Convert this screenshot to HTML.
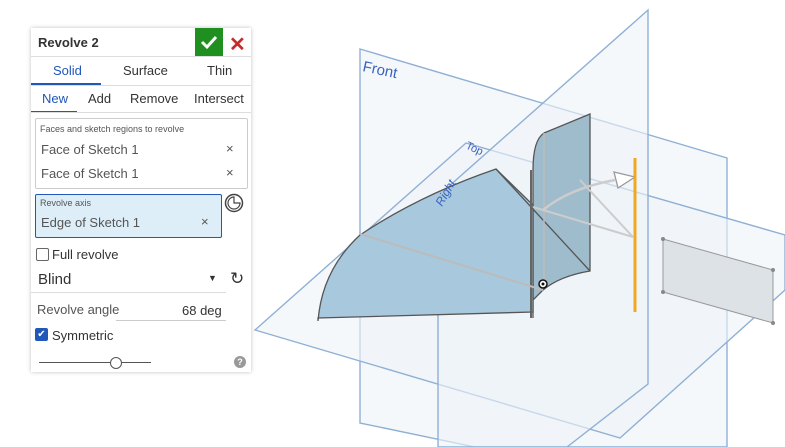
<!DOCTYPE html>
<html><head><style>
body{margin:0;width:785px;height:447px;background:#fff;overflow:hidden;position:relative;font-family:"Liberation Sans",sans-serif;}
svg{position:absolute;left:0;top:0}
.p{position:absolute;left:31px;top:28px;width:220px;height:344px;background:#fff;box-shadow:0 0 4px rgba(0,0,0,.25);font-size:13px;color:#333}
.a{position:absolute}
.hr{position:absolute;left:0;width:220px;height:1px;background:#ddd}
</style></head><body>
<svg width="785" height="447">
<g stroke="#8fb0d4" stroke-width="1.4" fill="#eef3f9" fill-opacity="0.6">
<polygon points="360,49 727,158 727,447 475,447 360,423"/>
<polygon points="255,330 466,143 785,235 785,290 620,438"/>
<polygon points="648,10 648,384 567,447 438,447 438,196"/>
</g>
<path d="M533,318 L533,170 Q533,140 544,133 L590,114 L590,271 Q560,276 543,290 L533,300 Z" fill="#9fbccd" stroke="#555" stroke-width="1.3"/>
<path d="M318,321 Q322,270 360,235 Q420,195 496,169 L533,205 L533,312 L318,318 Z" fill="#a8c9dd" stroke="#555" stroke-width="1.3"/>
<line x1="496" y1="169" x2="590" y2="271" stroke="#555" stroke-width="1.3"/>
<line x1="531" y1="170" x2="531" y2="318" stroke="#666" stroke-width="2"/>
<line x1="360" y1="234" x2="543" y2="290" stroke="#bbb" stroke-width="2"/>
<line x1="544" y1="133" x2="544" y2="285" stroke="#bbb" stroke-width="1.5"/>
<line x1="533" y1="207" x2="633" y2="237" stroke="#ccc" stroke-width="2"/>
<line x1="580" y1="180" x2="633" y2="237" stroke="#ccc" stroke-width="2"/>
<path d="M543,210 Q570,188 615,180" stroke="#ccc" stroke-width="2.5" fill="none"/>
<polygon points="614,172 635,177 618,188" fill="#fff" stroke="#999" stroke-width="1.3"/>
<circle cx="543" cy="284" r="4" fill="#fff" stroke="#111" stroke-width="1.5"/><circle cx="543" cy="284" r="1.5" fill="#111"/>
<line x1="635" y1="158" x2="635" y2="312" stroke="#f0a820" stroke-width="3"/>
<polygon points="663,239 773,270 773,323 663,292" fill="#dde2e6" stroke="#999" stroke-width="1"/>
<g fill="#888"><circle cx="663" cy="239" r="2"/><circle cx="773" cy="270" r="2"/><circle cx="773" cy="323" r="2"/><circle cx="663" cy="292" r="2"/></g>
<text x="362" y="71" fill="#3a63c0" font-size="15" font-family="Liberation Sans" transform="rotate(12 362 71)">Front</text>
<text x="465" y="148" fill="#3a63c0" font-size="11" font-family="Liberation Sans" transform="rotate(25 465 148)">Top</text>
<text x="442" y="207" fill="#3a63c0" font-size="12" font-style="italic" font-family="Liberation Sans" transform="rotate(-60 442 207)">Right</text>
</svg>
<div class="p">
<div class="a" style="left:7px;top:7px;font-weight:bold;font-size:13px">Revolve 2</div>
<div class="a" style="left:164px;top:0;width:28px;height:28px;background:#1f8f1f"><svg width="28" height="28"><path d="M7,14 L12,19 L21,9" stroke="#fff" stroke-width="3" fill="none"/></svg></div>
<div class="a" style="left:198px;top:4px;color:#c62b2b;font-size:20px;font-weight:bold">✕</div>
<div class="hr" style="top:28px"></div>
<div class="a" style="left:22px;top:35px;color:#2057b8">Solid</div>
<div class="a" style="left:92px;top:35px">Surface</div>
<div class="a" style="left:176px;top:35px">Thin</div>
<div class="a" style="left:0;top:55px;width:70px;height:2px;background:#2057b8"></div>
<div class="hr" style="top:57px"></div>
<div class="a" style="left:11px;top:63px;color:#2057b8">New</div>
<div class="a" style="left:57px;top:63px">Add</div>
<div class="a" style="left:99px;top:63px">Remove</div>
<div class="a" style="left:163px;top:63px">Intersect</div>
<div class="a" style="left:0;top:83px;width:46px;height:2px;background:#2057b8"></div>
<div class="hr" style="top:84px"></div>
<div class="a" style="left:4px;top:90px;width:211px;height:69px;border:1px solid #ccc;border-radius:2px"></div>
<div class="a" style="left:9px;top:96px;font-size:9px;color:#555">Faces and sketch regions to revolve</div>
<div class="a" style="left:10px;top:114px;color:#555">Face of Sketch 1</div><div class="a" style="left:195px;top:113px;color:#555">×</div>
<div class="a" style="left:10px;top:138px;color:#555">Face of Sketch 1</div><div class="a" style="left:195px;top:137px;color:#555">×</div>
<div class="a" style="left:4px;top:166px;width:185px;height:42px;border:1px solid #2057b8;border-radius:2px;background:#ddeef8"></div>
<div class="a" style="left:9px;top:170px;font-size:9px;color:#555">Revolve axis</div>
<div class="a" style="left:10px;top:187px;color:#555">Edge of Sketch 1</div><div class="a" style="left:170px;top:186px;color:#555">×</div>
<svg class="a" style="left:193px;top:165px" width="20" height="20"><circle cx="10" cy="10" r="8.5" fill="none" stroke="#444" stroke-width="1.5"/><path d="M10,4 A6,6 0 1,0 16,10 L10,10 Z" fill="none" stroke="#444" stroke-width="1.2"/></svg>
<div class="a" style="left:5px;top:220px;width:11px;height:11px;border:1px solid #666;border-radius:2px"></div>
<div class="a" style="left:21px;top:219px">Full revolve</div>
<div class="a" style="left:7px;top:243px;font-size:15px">Blind</div>
<div class="a" style="left:177px;top:245px;font-size:9px">▼</div>
<div class="a" style="left:199px;top:241px;font-size:17px">↻</div>
<div class="hr" style="top:264px;width:195px"></div>
<div class="a" style="left:6px;top:274px;color:#555">Revolve angle</div>
<div class="a" style="left:151px;top:275px">68 deg</div>
<div class="a" style="left:85px;top:292px;width:110px;height:1px;background:#ccc"></div>
<div class="a" style="left:4px;top:300px;width:13px;height:13px;background:#2057b8;border-radius:2px;color:#fff;font-size:10px;text-align:center;line-height:13px">✔</div>
<div class="a" style="left:21px;top:300px">Symmetric</div>
<div class="a" style="left:8px;top:334px;width:112px;height:1px;background:#555"></div>
<div class="a" style="left:79px;top:329px;width:10px;height:10px;border:1px solid #555;border-radius:50%;background:#fff"></div>
<div class="a" style="left:203px;top:328px;width:12px;height:12px;border-radius:50%;background:#999;color:#fff;font-size:9px;text-align:center;line-height:12px;font-weight:bold">?</div>
</div>
</body></html>
